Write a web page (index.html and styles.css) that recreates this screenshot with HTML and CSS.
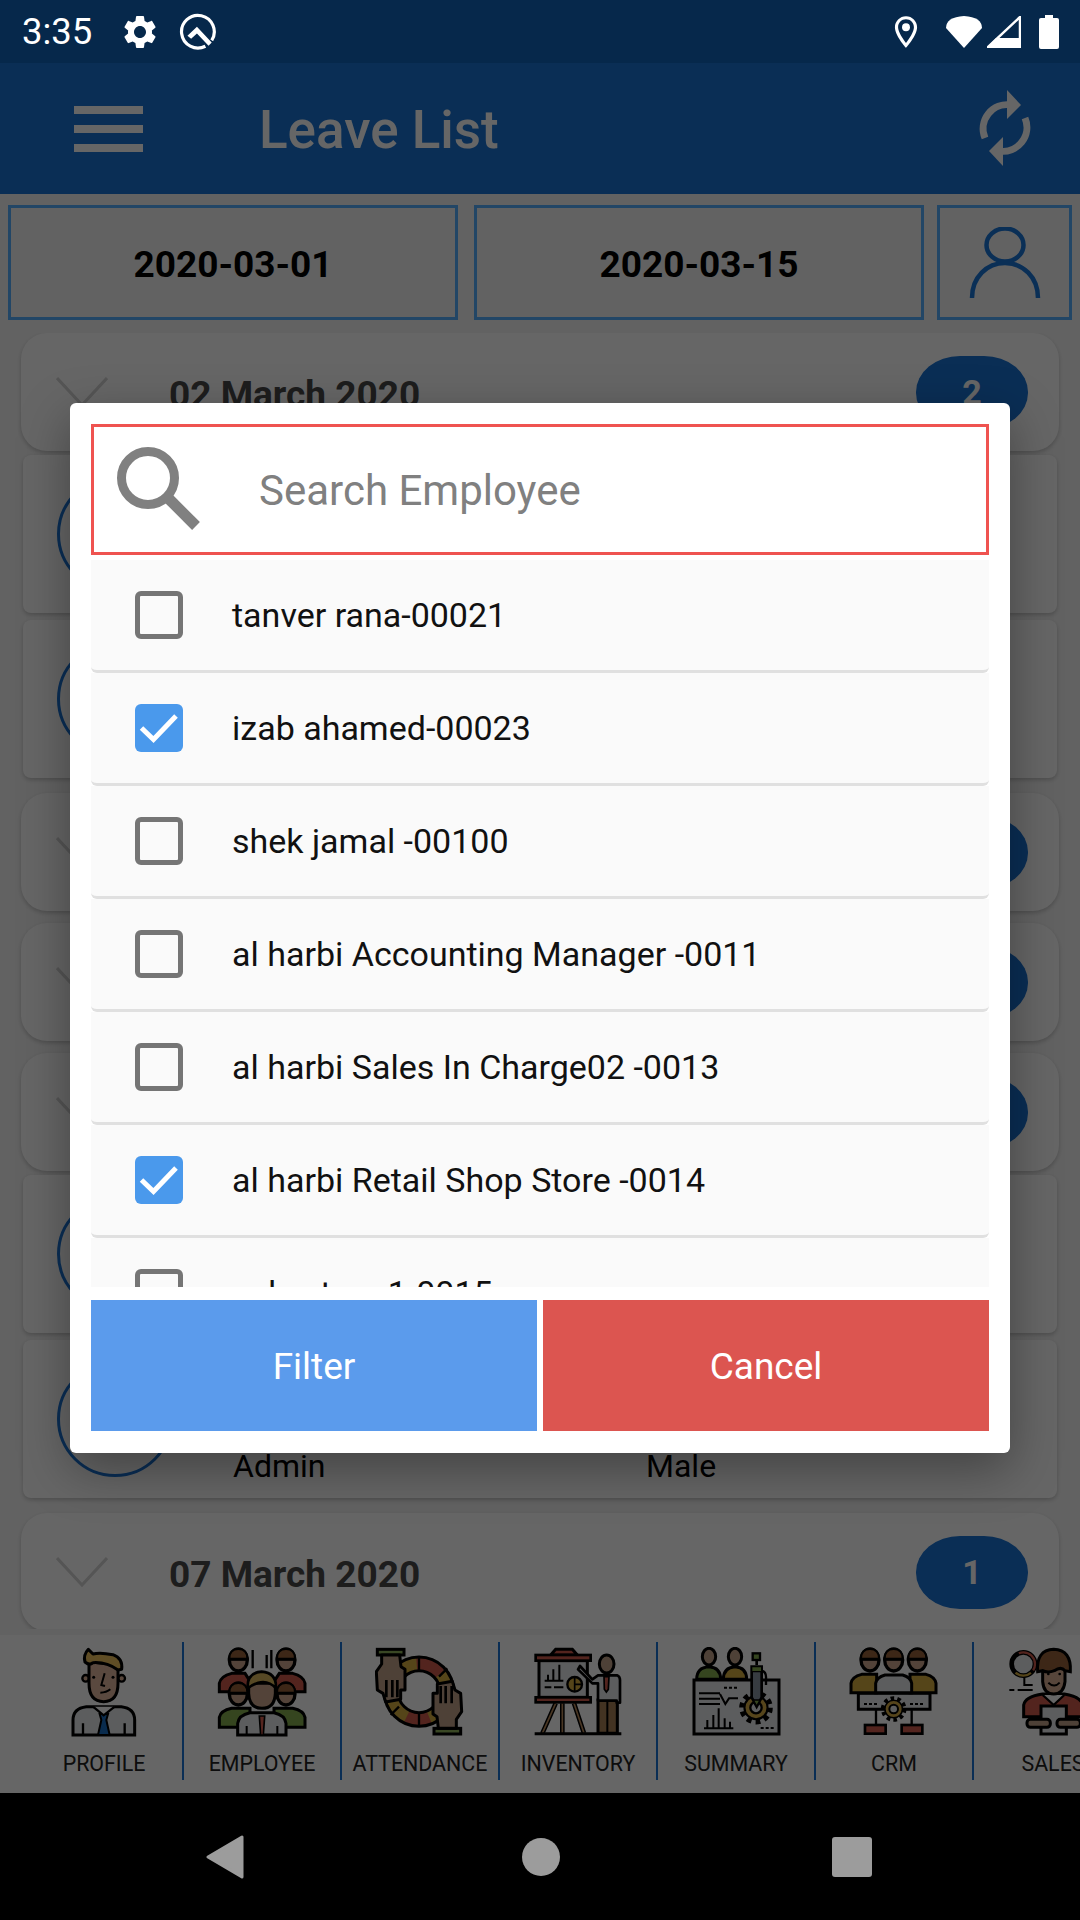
FILE: index.html
```html
<!DOCTYPE html>
<html lang="en">
<head>
<meta charset="utf-8">
<title>Leave List</title>
<link rel="stylesheet" href="styles.css">
</head>
<body>
<svg class="defs" width="0" height="0" aria-hidden="true">
  <defs>
    <g id="head">
      <ellipse cx="0" cy="0" rx="27" ry="33" fill="#cfa98f" stroke="#000" stroke-width="10"/>
      <path d="M-27 -4Q-27 -33 0 -33Q27 -33 27 -4Z" fill="#99633a" stroke="#000" stroke-width="6"/>
      <path d="M-27 -1L27 -1" stroke="#000" stroke-width="7"/>
    </g>
    <g id="hand">
      <rect x="55" y="28" width="80" height="17" fill="#8fb25a" stroke="#000" stroke-width="9"/>
      <path d="M68 45L122 45L126 80L138 88L138 150L125 150L125 178L80 186L72 160L55 150L52 95L68 72Z" fill="#c4a48a" stroke="#000" stroke-width="9" stroke-linejoin="round"/>
      <path d="M82 120V172M100 120V172M115 120V172" stroke="#000" stroke-width="8"/>
    </g>
    <g id="gear">
      <circle cx="0" cy="0" r="36" fill="none" stroke="#000" stroke-width="24" stroke-dasharray="12 10.6"/>
      <circle cx="0" cy="0" r="33" fill="#d8ad45" stroke="#000" stroke-width="6"/>
    </g>
  </defs>
</svg>

<header class="status">
  <span class="clock">3:35</span>
  <svg class="st-gear" viewBox="0 0 24 24"><path fill="#fff" d="M19.14 12.94c.04-.3.06-.61.06-.94 0-.32-.02-.64-.07-.94l2.03-1.58c.18-.14.23-.41.12-.61l-1.92-3.32c-.12-.22-.37-.29-.59-.22l-2.39.96c-.5-.38-1.03-.7-1.62-.94l-.36-2.54c-.04-.24-.24-.41-.48-.41h-3.84c-.24 0-.43.17-.47.41l-.36 2.54c-.59.24-1.13.57-1.62.94l-2.39-.96c-.22-.08-.47 0-.59.22L2.74 8.87c-.12.21-.08.47.12.61l2.03 1.58c-.05.3-.09.63-.09.94s.02.64.07.94l-2.03 1.58c-.18.14-.23.41-.12.61l1.92 3.32c.12.22.37.29.59.22l2.39-.96c.5.38 1.03.7 1.62.94l.36 2.54c.05.24.24.41.48.41h3.84c.24 0 .44-.17.47-.41l.36-2.54c.59-.24 1.13-.56 1.62-.94l2.39.96c.22.08.47 0 .59-.22l1.92-3.32c.12-.22.07-.47-.12-.61l-2.01-1.58zM12 15.6c-1.98 0-3.6-1.62-3.6-3.6s1.62-3.6 3.6-3.6 3.6 1.62 3.6 3.6-1.62 3.6-3.6 3.6z"/></svg>
  <svg class="st-q" viewBox="0 0 36 36"><path d="M25 31.5A15.5 15.5 0 1 1 31 26" fill="none" stroke="#fff" stroke-width="3"/><path d="M17 13L8 21.5L11.5 24.5L17 19.5L28 31L31 28Z" fill="#fff"/></svg>
  <span class="status-gap"></span>
  <svg class="st-pin" viewBox="0 0 24 24"><path fill="#fff" d="M12 2C8.13 2 5 5.13 5 9c0 5.25 7 13 7 13s7-7.75 7-13c0-3.87-3.13-7-7-7zM7 9c0-2.76 2.24-5 5-5s5 2.24 5 5c0 2.88-2.88 7.19-5 9.88C9.92 16.21 7 11.85 7 9z"/><circle cx="12" cy="9" r="2.5" fill="#fff"/></svg>
  <svg class="st-wifi" viewBox="0 0 38 32"><path d="M19 32L1 12Q1 1 19 0Q37 1 37 12Z" fill="#fff"/></svg>
  <svg class="st-signal" viewBox="0 0 34 32"><path d="M33 1V31H1Z" fill="none" stroke="#fff" stroke-width="2.5"/><path d="M0 32L9 22H34V32Z" fill="#fff"/></svg>
  <svg class="st-batt" viewBox="0 0 20 34"><path d="M6 0H14V3H18Q20 3 20 5V32Q20 34 18 34H2Q0 34 0 32V5Q0 3 2 3H6Z" fill="#fff"/></svg>
</header>

<div class="app-bar">
  <div class="burger"><i></i><i></i><i></i></div>
  <h1 class="title">Leave List</h1>
  <svg class="refresh" viewBox="0 0 56 76"><g id="rf"><path d="M34 15A24 24 0 0 0 8 48" fill="none" stroke="#fff" stroke-width="7"/><path d="M30 0L44 15L30 29Z" fill="#fff"/></g><use href="#rf" transform="rotate(180 28 38)"/></svg>
</div>

<div class="filters">
  <div class="date-box">2020-03-01</div>
  <div class="date-box date-two">2020-03-15</div>
  <div class="user-box">
    <svg viewBox="0 0 72 72" class="user-icon"><ellipse cx="36" cy="18" rx="18.5" ry="16.5" fill="none" stroke="#1b76d8" stroke-width="4.5"/><path d="M3 71C3 50 18 36 36 36S69 50 69 71" fill="none" stroke="#1b76d8" stroke-width="4.5"/></svg>
  </div>
</div>

<main class="list">
  <section class="day"><svg class="chev" viewBox="0 0 52 30"><path d="M1 1L26 28L51 1" fill="none" stroke="#d4d4d4" stroke-width="3"/></svg><span class="day-text">02 March 2020</span><span class="badge">2</span></section>
  <section class="sub"><span class="avatar"></span></section>
  <section class="sub"><span class="avatar"></span></section>
  <section class="day"><svg class="chev" viewBox="0 0 52 30"><path d="M1 1L26 28L51 1" fill="none" stroke="#d4d4d4" stroke-width="3"/></svg><span class="day-text"></span><span class="badge"></span></section>
  <section class="day"><svg class="chev" viewBox="0 0 52 30"><path d="M1 1L26 28L51 1" fill="none" stroke="#d4d4d4" stroke-width="3"/></svg><span class="day-text"></span><span class="badge"></span></section>
  <section class="day"><svg class="chev" viewBox="0 0 52 30"><path d="M1 1L26 28L51 1" fill="none" stroke="#d4d4d4" stroke-width="3"/></svg><span class="day-text"></span><span class="badge"></span></section>
  <section class="sub"><span class="avatar"></span></section>
  <section class="sub"><span class="avatar"></span><div class="sub-info"><span class="sub-a">Admin</span><span>Male</span></div></section>
  <section class="day"><svg class="chev" viewBox="0 0 52 30"><path d="M1 1L26 28L51 1" fill="none" stroke="#d4d4d4" stroke-width="3"/></svg><span class="day-text">07 March 2020</span><span class="badge">1</span></section>
</main>

<nav class="modules">
  <div class="module">
    <svg class="mod-icon" viewBox="28 21 270 270">
      <path d="M70 285V240Q70 205 110 200H215Q255 205 255 240V285Z" fill="#e6e8ea" stroke="#000" stroke-width="9"/>
      <path d="M100 285V250M225 285V250" stroke="#000" stroke-width="7"/>
      <path d="M150 222H175L170 240L180 285H145L155 240Z" fill="#1b6fc4" stroke="#000" stroke-width="6"/>
      <path d="M130 200L162 226L195 200" fill="#fff" stroke="#000" stroke-width="7"/>
      <circle cx="108" cy="115" r="10" fill="#d9ae93" stroke="#000" stroke-width="7"/>
      <circle cx="216" cy="115" r="10" fill="#d9ae93" stroke="#000" stroke-width="7"/>
      <path d="M118 65V130Q118 185 162 185Q205 185 205 130V75Z" fill="#e2b69d" stroke="#000" stroke-width="9"/>
      <path d="M116 28Q100 45 106 66Q120 78 130 68Q170 65 205 90L216 88Q220 55 190 44Q150 36 130 42Z" fill="#edc05e" stroke="#000" stroke-width="9" stroke-linejoin="round"/>
      <circle cx="132" cy="112" r="4.5" fill="#000"/><circle cx="190" cy="112" r="4.5" fill="#000"/>
      <path d="M165 100L155 135L166 138M152 158Q170 158 182 148" fill="none" stroke="#000" stroke-width="6"/>
    </svg>
    <span class="mod-label">PROFILE</span>
  </div>
  <div class="module">
    <svg class="mod-icon" viewBox="501 21 270 270">
      <path d="M608 30V85M650 45V85M664 30V85" stroke="#000" stroke-width="7"/>
      <path d="M508 155V130Q512 108 545 100H585L620 155Z" fill="#cf5a4c" stroke="#000" stroke-width="9"/>
      <path d="M765 155V130Q761 108 728 100H688L652 155Z" fill="#cf5a4c" stroke="#000" stroke-width="9"/>
      <use href="#head" transform="translate(565 60)"/><use href="#head" transform="translate(708 60)"/>
      <path d="M508 262V232Q512 212 545 205H600V262Z" fill="#85ad4f" stroke="#000" stroke-width="9"/>
      <path d="M765 262V232Q761 212 728 205H672V262Z" fill="#85ad4f" stroke="#000" stroke-width="9"/>
      <use href="#head" transform="translate(565 162)"/><use href="#head" transform="translate(708 162)"/>
      <path d="M563 285V250Q566 225 600 218H672Q705 225 708 250V285Z" fill="#e6e8ea" stroke="#000" stroke-width="9"/>
      <path d="M628 228H644L640 285H632Z" fill="#d65e4e" stroke="#000" stroke-width="5"/>
      <path d="M590 285V258M682 285V258" stroke="#000" stroke-width="6"/>
      <path d="M596 130V160Q598 205 636 205Q674 205 676 160V130Z" fill="#cfa98f" stroke="#000" stroke-width="9"/>
      <path d="M593 145Q590 98 635 95Q680 98 678 145Q655 120 625 128Q605 135 593 145Z" fill="#d9b65c" stroke="#000" stroke-width="8"/>
    </svg>
    <span class="mod-label">EMPLOYEE</span>
  </div>
  <div class="module">
    <svg class="mod-icon" viewBox="48 21 270 270">
      <circle cx="180" cy="155" r="84" fill="none" stroke="#d4ac40" stroke-width="38"/>
      <circle cx="180" cy="155" r="84" fill="none" stroke="#cf5a4c" stroke-width="38" stroke-dasharray="80 448" stroke-dashoffset="140"/>
      <circle cx="180" cy="155" r="84" fill="none" stroke="#cf5a4c" stroke-width="38" stroke-dasharray="70 458" stroke-dashoffset="-100"/>
      <circle cx="180" cy="155" r="104" fill="none" stroke="#000" stroke-width="9"/>
      <circle cx="180" cy="155" r="63" fill="none" stroke="#000" stroke-width="9"/>
      <path d="M180 92V50M240 110L265 85M180 218V260M120 200L95 225M235 195L262 215" stroke="#000" stroke-width="7"/>
      <use href="#hand"/>
      <use href="#hand" transform="rotate(180 180 155)"/>
    </svg>
    <span class="mod-label">ATTENDANCE</span>
  </div>
  <div class="module">
    <svg class="mod-icon" viewBox="517 21 270 270">
      <path d="M585 190L545 280M640 190L670 280M605 190V280" stroke="#000" stroke-width="14"/>
      <path d="M585 190L545 280M640 190L670 280M605 190V280" stroke="#b8895a" stroke-width="5"/>
      <rect x="535" y="62" width="145" height="110" fill="#e6e8ea" stroke="#000" stroke-width="9"/>
      <path d="M570 45L585 28H635L650 45Z" fill="#cf5a4c" stroke="#000" stroke-width="9"/>
      <rect x="525" y="45" width="165" height="17" fill="#cf5a4c" stroke="#000" stroke-width="8"/>
      <rect x="525" y="172" width="165" height="15" fill="#cf5a4c" stroke="#000" stroke-width="8"/>
      <path d="M552 122H608M552 142H572M580 142H608M562 122V104M578 122V88M596 122V74" stroke="#000" stroke-width="6"/>
      <circle cx="642" cy="133" r="22" fill="#d4ac40" stroke="#000" stroke-width="7"/>
      <path d="M642 111V155M642 133H664" stroke="#000" stroke-width="5"/>
      <path d="M712 280V180H770V280Z" fill="#a87f55" stroke="#000" stroke-width="9"/>
      <path d="M740 180V280" stroke="#000" stroke-width="6"/>
      <path d="M658 78L695 118L712 106H770Q778 110 778 120V188H768V182H712V130L695 130L652 88Z" fill="#e6e8ea" stroke="#000" stroke-width="8" stroke-linejoin="round"/>
      <path d="M730 110H745L743 148L737 156L731 148Z" fill="#cf5a4c" stroke="#000" stroke-width="5"/>
      <ellipse cx="738" cy="72" rx="22" ry="27" fill="#c4a48a" stroke="#000" stroke-width="9"/>
      <path d="M522 281H782" stroke="#000" stroke-width="9"/>
    </svg>
    <span class="mod-label">INVENTORY</span>
  </div>
  <div class="module">
    <svg class="mod-icon" viewBox="31 21 270 270">
      <path d="M48 118Q48 82 85 80Q120 82 120 118Z" fill="#85ad4f" stroke="#000" stroke-width="9"/>
      <path d="M128 118Q128 82 163 80Q198 82 198 118Z" fill="#d4ac40" stroke="#000" stroke-width="9"/>
      <ellipse cx="85" cy="50" rx="20" ry="25" fill="#c4a48a" stroke="#000" stroke-width="9"/>
      <ellipse cx="163" cy="50" rx="20" ry="25" fill="#c4a48a" stroke="#000" stroke-width="9"/>
      <rect x="40" y="120" width="255" height="162" fill="#e6e8ea" stroke="#000" stroke-width="9"/>
      <path d="M55 160H118M55 176H118M55 192H118M118 162L134 192L145 175H172" fill="none" stroke="#000" stroke-width="6"/>
      <path d="M70 265H158M80 265V240M98 265V225M114 265V205M132 265V235M148 265V245" stroke="#000" stroke-width="6"/>
      <path d="M130 143H170M240 264H280" stroke="#000" stroke-width="6" stroke-dasharray="9 6"/>
      <use href="#gear" transform="translate(226 203) scale(1.05)"/>
      <circle cx="226" cy="203" r="17" fill="#e6e8ea" stroke="#000" stroke-width="7"/>
      <rect x="216" y="40" width="22" height="20" fill="#85ad4f" stroke="#000" stroke-width="7"/>
      <path d="M228 60V75" stroke="#000" stroke-width="8"/>
      <path d="M213 80H243V172L228 200L213 172Z" fill="#8a96a3" stroke="#000" stroke-width="8"/>
      <path d="M213 80H243V95H213ZM218 180H238L228 198Z" fill="#85ad4f" stroke="#000" stroke-width="4"/>
      <path d="M243 92Q258 95 256 118V135" fill="none" stroke="#000" stroke-width="7"/>
    </svg>
    <span class="mod-label">SUMMARY</span>
  </div>
  <div class="module">
    <svg class="mod-icon" viewBox="507 21 270 270">
      <path d="M535 160H750V208H535Z" fill="#e6e8ea" stroke="#000" stroke-width="9"/>
      <path d="M513 158V130Q516 110 545 103H590V158ZM768 158V130Q765 110 738 103H690V158Z" fill="#d4ac40" stroke="#000" stroke-width="9"/>
      <path d="M587 158V130Q590 112 615 105H668Q692 112 695 130V158Z" fill="#e6e8ea" stroke="#000" stroke-width="9"/>
      <use href="#head" transform="translate(570 60)"/><use href="#head" transform="translate(712 60)"/><use href="#head" transform="translate(641 60)"/>
      <path d="M552 192H592M690 192H730" stroke="#000" stroke-width="6" stroke-dasharray="9 6"/>
      <path d="M695 208V255M588 208V255" stroke="#000" stroke-width="7"/>
      <rect x="555" y="255" width="62" height="26" fill="#cf5a4c" stroke="#000" stroke-width="8"/>
      <rect x="665" y="255" width="62" height="26" fill="#cf5a4c" stroke="#000" stroke-width="8"/>
      <use href="#gear" transform="translate(641 207) scale(.8)"/>
      <circle cx="641" cy="207" r="13" fill="#e6e8ea" stroke="#000" stroke-width="6"/>
    </svg>
    <span class="mod-label">CRM</span>
  </div>
  <div class="module">
    <svg class="mod-icon" viewBox="141 21 270 270">
      <circle cx="187" cy="72" r="35" fill="#e6e8ea" stroke="#000" stroke-width="14"/>
      <circle cx="187" cy="72" r="35" fill="none" stroke="#cf5a4c" stroke-width="7" stroke-dasharray="90 130" stroke-dashoffset="70"/>
      <circle cx="187" cy="72" r="35" fill="none" stroke="#d4ac40" stroke-width="7" stroke-dasharray="50 170" stroke-dashoffset="-30"/>
      <path d="M190 112V135H215M145 150H160M170 150H215" stroke="#000" stroke-width="6" fill="none"/>
      <path d="M188 230V195Q192 170 245 162H310Q360 170 365 195V230H188Z" fill="#cf5a4c" stroke="#000" stroke-width="9"/>
      <path d="M245 165L278 195L310 165" fill="#fff" stroke="#000" stroke-width="7"/>
      <path d="M245 85V125Q248 162 278 162Q308 162 312 125V85Z" fill="#d9ae93" stroke="#000" stroke-width="9"/>
      <path d="M230 95Q225 30 278 28Q332 30 328 95L312 92Q300 78 280 92Q260 100 245 92Z" fill="#99633a" stroke="#000" stroke-width="9"/>
      <circle cx="262" cy="102" r="4" fill="#000"/><circle cx="296" cy="102" r="4" fill="#000"/>
      <path d="M262 128Q280 145 296 128" fill="none" stroke="#000" stroke-width="6"/>
      <rect x="240" y="198" width="76" height="84" fill="#e6e8ea" stroke="#000" stroke-width="9"/>
      <rect x="198" y="238" width="70" height="24" rx="10" fill="#c4a48a" stroke="#000" stroke-width="9"/>
      <rect x="288" y="238" width="70" height="24" rx="10" fill="#c4a48a" stroke="#000" stroke-width="9"/>
    </svg>
    <span class="mod-label">SALES</span>
  </div>
</nav>

<footer class="sys-nav">
  <svg class="sys-back" viewBox="0 0 38 44"><path d="M36 2V42L2 22Z" fill="#9c9c9c" stroke="#9c9c9c" stroke-width="3" stroke-linejoin="round"/></svg>
  <span class="sys-home"></span>
  <span class="sys-recent"></span>
</footer>

<div class="scrim">
  <div class="modal">
    <div class="search">
      <svg class="search-icon" viewBox="0 0 84 84"><circle cx="32" cy="32" r="26.5" fill="none" stroke="#808080" stroke-width="9"/><path d="M52 52L80 80" stroke="#808080" stroke-width="11"/></svg>
      <span class="placeholder">Search Employee</span>
    </div>
    <div class="emp-list">
      <div class="emp"><span class="check"></span><span>tanver rana-00021</span></div>
      <div class="emp"><span class="check on"><svg viewBox="0 0 48 48"><path d="M6.5 24L18.5 35.5L41 12" fill="none" stroke="#fff" stroke-width="5"/></svg></span><span>izab ahamed-00023</span></div>
      <div class="emp"><span class="check"></span><span>shek jamal -00100</span></div>
      <div class="emp"><span class="check"></span><span>al harbi Accounting Manager -0011</span></div>
      <div class="emp"><span class="check"></span><span>al harbi Sales In Charge02 -0013</span></div>
      <div class="emp"><span class="check on"><svg viewBox="0 0 48 48"><path d="M6.5 24L18.5 35.5L41 12" fill="none" stroke="#fff" stroke-width="5"/></svg></span><span>al harbi Retail Shop Store -0014</span></div>
      <div class="emp"><span class="check"></span><span>sales tem 1-0015</span></div>
    </div>
    <div class="actions">
      <button class="btn btn-filter">Filter</button>
      <button class="btn btn-cancel">Cancel</button>
    </div>
  </div>
</div>
</body>
</html>
```

FILE: styles.css
```css
* { box-sizing: border-box; }
html, body { margin: 0; padding: 0; }
body {
  position: relative;
  width: 1080px;
  height: 1920px;
  overflow: hidden;
  background: #f5f5f5;
  font-family: Roboto, "Noto Sans", sans-serif;
}
.defs { position: absolute; }

.status {
  height: 63px;
  background: #06284b;
  color: #fff;
  display: flex;
  align-items: center;
  padding-left: 22px;
}
.clock { font-size: 36.5px; width: 98px; }
.st-gear { width: 40px; height: 40px; margin-right: 19px; }
.st-q { width: 38px; height: 38px; }
.status-gap { flex: 1; }
.st-pin { width: 38px; height: 38px; margin-right: 20px; }
.st-wifi { width: 38px; height: 32px; margin-right: 4px; }
.st-signal { width: 34px; height: 32px; margin-right: 18px; }
.st-batt { width: 20px; height: 34px; margin-right: 21px; }

.app-bar {
  height: 131px;
  background: #1973d4;
  display: flex;
  align-items: center;
  padding-left: 74px;
}
.burger { width: 69px; display: flex; flex-direction: column; gap: 11px; margin-right: 116px; }
.burger i { display: block; height: 8px; background: #fff; }
.title { margin: 0; flex: 1; padding-top: 3px; font-size: 53px; font-weight: 500; color: #fff; }
.refresh { width: 56px; height: 76px; margin-right: 47px; margin-bottom: 2px; }

.filters { display: flex; padding: 11px 0 13px 8px; }
.date-box, .user-box {
  height: 115px;
  border: 3px solid #55b0ff;
  display: flex;
  align-items: center;
  justify-content: center;
}
.date-box { width: 450px; padding-top: 3px; font-size: 37px; font-weight: 700; color: #000; }
.date-two { margin: 0 13px 0 16px; }
.user-box { width: 135px; }
.user-icon { width: 72px; height: 72px; }

.list { height: 1296px; overflow: hidden; padding: 0 21px; }
.day {
  height: 118px;
  margin-top: 12px;
  background: #fff;
  border-radius: 26px;
  box-shadow: 0 2px 4px rgba(0,0,0,.2);
  display: flex;
  align-items: center;
  padding: 0 31px 0 35px;
}
.day:first-child { margin-top: 0; }
.sub + .day { margin-top: 15px; }
.chev { width: 52px; height: 30px; margin-right: 61px; }
.day-text { flex: 1; font-size: 37px; font-weight: 700; color: #4a4a4a; padding-top: 4px; }
.badge {
  width: 112px;
  height: 73px;
  border-radius: 44px / 36px;
  background: #1973d4;
  color: #fff;
  font-size: 34px;
  font-weight: 700;
  display: flex;
  align-items: center;
  justify-content: center;
}
.sub {
  height: 158px;
  margin: 4px 2px 0;
  background: #fff;
  border-radius: 8px;
  box-shadow: 0 2px 4px rgba(0,0,0,.2);
  display: flex;
  align-items: center;
  padding-left: 34px;
}
.sub + .sub { margin-top: 7px; }
.avatar { width: 116px; height: 116px; border-radius: 50%; border: 3px solid #1973d4; flex: none; }
.sub-info { align-self: flex-end; margin: 0 0 13px 60px; display: flex; font-size: 32px; color: #000; }
.sub-a { width: 413px; }

.modules {
  margin-top: 6px;
  height: 158px;
  display: flex;
  padding-left: 26px;
  background: #fff;
}
.module {
  flex: none;
  width: 158px;
  height: 138px;
  margin-top: 7px;
  border-right: 2px solid #1973d4;
  display: flex;
  flex-direction: column;
  align-items: center;
  padding-top: 5px;
}
.module:last-child { border-right: 0; }
.mod-icon { width: 90px; height: 90px; flex: none; }
.mod-label { margin-top: 15px; font-size: 21.4px; color: #222; white-space: nowrap; line-height: 24px; }

.sys-nav {
  height: 127px;
  background: #000;
  display: flex;
  align-items: center;
  padding-left: 206px;
  position: relative;
  z-index: 2;
}
.sys-back { width: 38px; height: 44px; margin-right: 278px; }
.sys-home { width: 38px; height: 38px; border-radius: 50%; background: #9c9c9c; margin-right: 272px; }
.sys-recent { width: 40px; height: 40px; border-radius: 3px; background: #9c9c9c; }

.scrim {
  position: absolute;
  top: 63px;
  left: 0;
  width: 1080px;
  height: 1730px;
  background: rgba(0,0,0,.6);
  display: flex;
  align-items: center;
  justify-content: center;
}
.modal {
  width: 940px;
  height: 1050px;
  background: #fff;
  border-radius: 6px;
  padding: 21px;
  box-shadow: 0 16px 50px rgba(0,0,0,.35);
}
.search {
  height: 131px;
  border: 3px solid #ef5350;
  display: flex;
  align-items: center;
  padding-left: 22px;
}
.search-icon { width: 84px; height: 84px; margin: 0 59px 4px 0; flex: none; }
.placeholder { font-size: 42px; color: #808080; padding-top: 2px; }
.emp-list { height: 727px; margin-top: 5px; overflow: hidden; }
.emp {
  height: 113px;
  background: #fafafa;
  border-bottom: 3px solid #e0e0e0;
  border-radius: 0 0 6px 6px;
  display: flex;
  align-items: center;
  padding-left: 44px;
  font-size: 34px;
  color: #111;
}
.check {
  width: 48px;
  height: 48px;
  flex: none;
  border: 5px solid #757575;
  border-radius: 6px;
  margin-right: 49px;
}
.check.on { border: 0; background: #4a99ec; }
.check svg { display: block; width: 48px; height: 48px; }
.actions { display: flex; gap: 6px; margin-top: 13px; }
.btn {
  flex: 1;
  height: 131px;
  border: 0;
  padding-top: 3px;
  color: #fff;
  font-family: inherit;
  font-size: 37px;
}
.btn-filter { background: #5b9bec; }
.btn-cancel { background: #dc5550; }
```
